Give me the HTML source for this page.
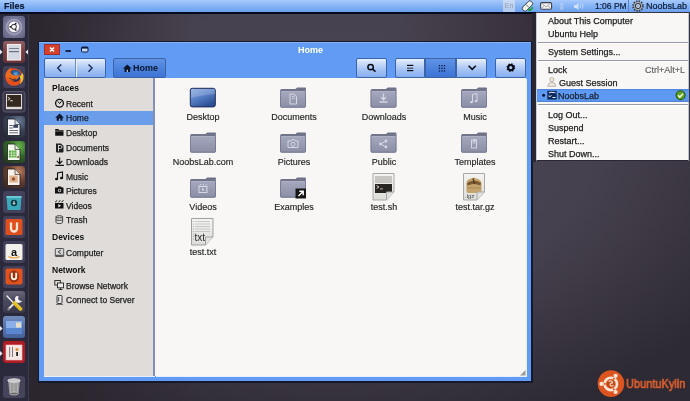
<!DOCTYPE html>
<html><head><meta charset="utf-8">
<style>
*{margin:0;padding:0;box-sizing:border-box}
html,body{width:690px;height:401px;overflow:hidden;font-family:"Liberation Sans",sans-serif;-webkit-font-smoothing:antialiased}
.a,.btn,#side .h,#side .i,.lbl,#menu .m{will-change:transform}
body{position:relative;background:#2a2529}
.a{position:absolute}
#bg{left:0;top:0;width:690px;height:401px;background:radial-gradient(ellipse 480px 300px at 330px 140px,#4a4552 0%,#46414e 55%,#2e2a34 100%)}
#bg2{left:0;top:0;width:690px;height:401px;background:linear-gradient(90deg,rgba(44,38,46,1) 0px,rgba(44,38,46,1) 30px,rgba(44,38,46,0) 190px)}
#panel{left:0;top:0;width:690px;height:12px;background:linear-gradient(#a8cafc,#88b6f6 45%,#6aa0ee)}
#panel .t{font-size:9px;color:#0e1a34;top:1px;line-height:11px;-webkit-text-stroke:.2px #0e1a34}
#launcher{left:0;top:13px;width:29px;height:388px;background:#2b2733;border-right:1px solid #3a3540}
.tile{position:absolute;left:3px;width:22px;height:22px;border-radius:3px;overflow:hidden}
#win{left:39px;top:42px;width:493px;height:340px;background:#6399ec;border:1px solid #1a2540}
.btn{position:absolute;top:58px;height:20px;border:1px solid #3c64a8;border-radius:2px;background:linear-gradient(#e6eefc,#a9c6f4 55%,#86aef0)}
.btnp{background:linear-gradient(#5f93e6,#3d74d4)}
#side{left:44px;top:78px;width:111px;height:298px;background:#dfdcd9;border-right:2px solid #8490b8;box-shadow:0 1px 0 #e8f0fc}
#side .h{position:absolute;left:8px;font-size:8.5px;font-weight:bold;color:#111;line-height:10px}
#side .i{position:absolute;left:22px;font-size:8.5px;color:#1e1e1e;line-height:10px;-webkit-text-stroke:.25px #1e1e1e}
#content{left:155px;top:78px;width:371px;height:298px;background:#f8f7f6;box-shadow:1px 1px 0 #e8f0fc}
.lbl{position:absolute;font-size:9px;color:#242424;line-height:10px;text-align:center;width:90px;-webkit-text-stroke:.15px #242424}
.fold{position:absolute;width:26px;height:20px}
#menu{left:536px;top:13px;width:153px;height:148px;background:#f8f7f6;border:1px solid #c8ccd4;border-top:none;border-bottom-color:#2a2834;border-right-color:#bcc6d0}
#menu .m{position:absolute;left:11px;font-size:9px;color:#222;line-height:10px;-webkit-text-stroke:.25px #222}
#menu .sep{position:absolute;left:1px;width:150px;height:2px;border-top:1px solid #959aa4;border-bottom:1px solid #fff}
</style></head><body>
<div id="bg" class="a"></div>
<div id="bg2" class="a"></div>
<div class="a" style="left:400px;top:13px;width:132px;height:30px;background:linear-gradient(90deg,rgba(36,26,32,0),rgba(36,26,32,.4))"></div>

<!-- top panel -->
<div id="panel" class="a">
  <div class="a t" style="left:4px;font-weight:bold;font-size:9px">Files</div>
  <div class="a" style="left:503px;top:0;width:12px;height:12px;background:rgba(225,230,240,.6);color:#9a9aa4;font-size:7px;line-height:12px;text-align:center">En</div>
  <svg class="a" style="left:520px;top:0" width="70" height="12" viewBox="0 0 70 12">
    <g transform="translate(7.5,6) rotate(-45)">
      <rect x="-6" y="-2.6" width="12" height="5.2" rx="2.2" fill="#eef4e6" stroke="#30384a" stroke-width=".9"/>
      <path d="M0 -2.4 v4.8" stroke="#505a64" stroke-width=".8"/>
    </g>
    <path d="M8.3 9.3 l1.3 1.3 l3.2 -3.2" stroke="#18a030" stroke-width="1.6" fill="none"/>
    <rect x="20.6" y="2.6" width="11" height="6.6" rx="1.2" fill="#f4f2ee" stroke="#3a4254" stroke-width="1.1"/>
    <path d="M21.5 3.4 L26.1 6.8 L30.7 3.4 M21.5 8.4 l2.8 -2.5 M30.7 8.4 l-2.8 -2.5" stroke="#8a8e98" stroke-width=".7" fill="none"/>
    <rect x="40" y="3" width="3.5" height="7" fill="#c0d2ee" opacity=".5"/>
    <path d="M54 5 h2 l2.5 -2 v7 l-2.5 -2 h-2z" fill="#e6eefa" opacity=".8"/>
    <path d="M60 4 q1.5 2 0 4 M62 3 q2.5 3 0 6" stroke="#e6eefa" stroke-width=".8" fill="none" opacity=".7"/>
  </svg>
  <div class="a t" style="left:595px;font-size:8.5px;top:1px">1:06 PM</div>
  <div class="a" style="left:628px;top:0;width:1px;height:12px;background:#5a86c8"></div>
  <svg class="a" style="left:632px;top:0" width="12" height="12" viewBox="0 0 12 12">
    <g transform="translate(6,6)">
    <circle r="4.6" fill="none" stroke="#30343c" stroke-width="2.4" stroke-dasharray="1.3 1.11"/>
    <circle r="3.9" fill="#f2f2f4" stroke="#50545c" stroke-width=".5"/>
    <circle r="2.5" fill="none" stroke="#2a2c34" stroke-width="1.1"/>
    <circle r="1.6" fill="#9ab8e0"/>
    </g>
  </svg>
  <div class="a t" style="left:646px">NoobsLab</div>
</div>

<!-- launcher -->
<svg class="a" style="left:0;top:0" width="29" height="401" viewBox="0 0 29 401">
<defs>
 <linearGradient id="gloss" x1="0" y1="0" x2="0" y2="1"><stop offset="0" stop-color="#fff" stop-opacity=".22"/><stop offset=".5" stop-color="#fff" stop-opacity=".05"/><stop offset="1" stop-color="#000" stop-opacity=".1"/></linearGradient>
 <radialGradient id="dashg" cx=".5" cy=".5" r=".7"><stop offset="0" stop-color="#a4a4bc"/><stop offset=".5" stop-color="#7c7c9c"/><stop offset="1" stop-color="#5c5c7e"/></radialGradient>
 <radialGradient id="ffg" cx=".55" cy=".35" r=".6"><stop offset="0" stop-color="#6ab0e0"/><stop offset=".45" stop-color="#2a5a9a"/><stop offset="1" stop-color="#1a2a50"/></radialGradient>
<radialGradient id="wg" cx=".7" cy=".25" r=".9"><stop offset="0" stop-color="#6a7c98"/><stop offset=".5" stop-color="#3a4458"/><stop offset="1" stop-color="#262a36"/></radialGradient>
 <radialGradient id="cg" cx=".7" cy=".25" r=".9"><stop offset="0" stop-color="#6ab850"/><stop offset=".5" stop-color="#356a2a"/><stop offset="1" stop-color="#24361e"/></radialGradient>
 <radialGradient id="ig" cx=".7" cy=".25" r=".9"><stop offset="0" stop-color="#c08060"/><stop offset=".5" stop-color="#6a4030"/><stop offset="1" stop-color="#3a2822"/></radialGradient>
</defs>
<rect x="0" y="13" width="29" height="388" fill="#2b293c"/>
<rect x="28" y="13" width="1" height="388" fill="#3c3a50"/>
<!-- dash -->
<rect x="3" y="16" width="22" height="22" rx="2.5" fill="url(#dashg)"/>
<circle cx="14" cy="27" r="7.5" fill="none" stroke="#c4c4d8" stroke-width="1.5" opacity=".5"/>
<circle cx="14" cy="26.8" r="5.2" fill="#fbfbfe"/>
<circle cx="13.9" cy="26.8" r="2.5" fill="none" stroke="#111" stroke-width=".9"/>
<circle cx="10.3" cy="26.8" r=".9" fill="#111"/><circle cx="15.7" cy="23.7" r=".9" fill="#111"/><circle cx="15.7" cy="29.9" r=".9" fill="#111"/>
<!-- files (active) -->
<rect x="3" y="41" width="22" height="22" rx="3" fill="#6e3438"/>
<rect x="3" y="41" width="22" height="22" rx="3" fill="url(#gloss)"/>
<rect x="7.5" y="44.5" width="13" height="15.5" fill="#d4d8e2" stroke="#f8e8e4" stroke-width="1.2"/>
<rect x="9" y="48" width="10" height="1" fill="#7a8090"/><rect x="9" y="51" width="10" height="1.2" fill="#6a7080"/>
<path d="M0 49.5 L2.6 52 L0 54.5Z" fill="#e8e8ee"/>
<path d="M28 49.5 L25.4 52 L28 54.5Z" fill="#e8e8ee"/>
<!-- firefox -->
<rect x="3" y="66" width="22" height="22" rx="3" fill="#43415a"/>
<circle cx="14" cy="77" r="8.8" fill="#e4501c"/>
<circle cx="15.2" cy="75.8" r="6" fill="url(#ffg)"/>
<path d="M22.6 73 a8.8 8.8 0 0 1 -3 11.5 q2 -4 0 -8 z" fill="#f4c030"/>
<path d="M5.5 75 q1 -6 6.5 -7.5 q-2.5 2.5 -1.5 5 q1 2.5 4.5 3 q3 .3 5 -1.5 q-1 5.5 -6.5 6.5 q-6.5 .5 -8 -5.5z" fill="#ec6a1c"/>
<path d="M9 78 q3 2.5 7 1" stroke="#1a1a3a" stroke-width=".8" fill="none"/>
<!-- terminal -->
<rect x="3" y="91.5" width="22" height="20.5" rx="2.5" fill="#3a384a" stroke="#5c5a6c" stroke-width="1"/>
<rect x="6" y="94" width="16" height="15.2" fill="#dedad6"/>
<rect x="7" y="95" width="14" height="11.8" fill="#33291f"/>
<path d="M7.8 97.2 l2.3 1.5 l-2.3 1.5" stroke="#e8e4e0" stroke-width=".9" fill="none"/><rect x="10.2" y="100.3" width="2.6" height="1" fill="#e8e4e0"/>
<!-- writer -->
<rect x="3" y="116" width="22" height="22" rx="3" fill="url(#wg)"/>
<path d="M7.5 119 h7.5 l5 5.5 v11 h-12.5z" fill="#f6f6f8" stroke="#141820" stroke-width=".8"/>
<path d="M15 119 v5.5 h5" fill="#d8dce4" stroke="#141820" stroke-width=".6"/>
<rect x="9.3" y="125" width="3.5" height="1" fill="#5a6070"/><rect x="13.3" y="124.8" width="4.8" height="3" fill="#3a4458"/>
<rect x="9.3" y="127.5" width="3.5" height="1" fill="#5a6070"/>
<rect x="9.3" y="130" width="8.8" height="1" fill="#6a7080"/><rect x="9.3" y="132.3" width="8.8" height="1" fill="#6a7080"/>
<!-- calc -->
<rect x="3" y="141" width="22" height="22" rx="3" fill="url(#cg)"/>
<path d="M7.5 144 h7.5 l5 5.5 v11 h-12.5z" fill="#f2f8ee" stroke="#142010" stroke-width=".8"/>
<path d="M15 144 v5.5 h5" fill="#d8e4d0" stroke="#142010" stroke-width=".6"/>
<rect x="9" y="150.5" width="7.5" height="7" fill="#58a83e"/>
<path d="M9 153 h7.5 M9 155.3 h7.5 M11.5 150.5 v7 M14 150.5 v7" stroke="#e4f4d8" stroke-width=".6"/>
<path d="M16.5 158 l2 -3 l.8 3z" fill="#8a6a40"/>
<!-- impress -->
<rect x="3" y="166" width="22" height="22" rx="3" fill="url(#ig)"/>
<path d="M7.5 169 h7.5 l5 5.5 v11 h-12.5z" fill="#f8f0ea" stroke="#201410" stroke-width=".8"/>
<path d="M15 169 v5.5 h5" fill="#e8dcd0" stroke="#201410" stroke-width=".6"/>
<rect x="9.3" y="175.5" width="8.5" height="7" fill="#e0b490"/>
<circle cx="13.5" cy="179" r="1.7" fill="#9a5030"/>
<!-- software center -->
<rect x="3" y="191" width="22" height="22" rx="3" fill="#43415a"/>
<path d="M6.5 196 h15 l-1 14 h-13z" fill="#3aa8b8"/>
<rect x="6.5" y="196" width="15" height="2" fill="#6ac8d4"/>
<circle cx="14" cy="203" r="3.2" fill="#0e3a44"/>
<path d="M14 201 v3 M12.8 203 l1.2 1.4 l1.2 -1.4" stroke="#fff" stroke-width=".9" fill="none"/>
<!-- ubuntu store U -->
<rect x="3" y="216" width="22" height="22" rx="3" fill="#43415a"/>
<rect x="5.5" y="219" width="17" height="16" rx="1.5" fill="#e0501e"/>
<path d="M11 222.5 v6 a3 3 0 0 0 6 0 v-6" stroke="#fbe6d6" stroke-width="2.3" fill="none"/>
<!-- amazon -->
<rect x="3" y="241" width="22" height="22" rx="3" fill="#43415a"/>
<rect x="5.5" y="244" width="17" height="16" rx="1.5" fill="#f2f0ea"/>
<text x="14" y="255.5" font-family="Liberation Sans" font-weight="bold" font-size="11" text-anchor="middle" fill="#111">a</text>
<path d="M8.5 256.5 q5.5 3 11 0" stroke="#e89a30" stroke-width="1.2" fill="none"/>
<!-- ubuntu one -->
<rect x="3" y="266" width="22" height="22" rx="3" fill="#43415a"/>
<rect x="5.5" y="268.5" width="17" height="16" rx="2" fill="#e2521e"/>
<ellipse cx="14" cy="276.5" rx="5" ry="6" fill="#5a1a0a" opacity=".55"/>
<path d="M11.8 272.8 v4.2 a2.2 2.2 0 0 0 4.4 0 v-4.2" stroke="#fff0e0" stroke-width="1.9" fill="none"/>
<!-- system tools -->
<rect x="3" y="291" width="22" height="22" rx="3" fill="#3e3c52"/>
<rect x="3" y="291" width="22" height="22" rx="3" fill="url(#gloss)"/>
<path d="M7 296 L15 304.5" stroke="#f4f4f4" stroke-width="1.3" stroke-linecap="round"/>
<path d="M8.5 309 L17 300.5" stroke="#e8e8e8" stroke-width="1.8"/>
<path d="M16.5 296 a3.8 3.8 0 1 0 5.5 5 l-2.6 -.4 l-1.4 -1.9 l.7 -2.4z" fill="#f2f2f2"/>
<path d="M7.8 310 l1.8 -1.8" stroke="#888" stroke-width="2"/>
<path d="M14.5 303 L20.5 309" stroke="#e0b818" stroke-width="3.8" stroke-linecap="round"/>
<path d="M15 302.5 L21 308.5" stroke="#f8e070" stroke-width=".8" stroke-linecap="round"/>
<!-- workspace -->
<rect x="3" y="316" width="22" height="22" rx="3" fill="#4a6aa8"/>
<rect x="3" y="316" width="22" height="22" rx="3" fill="url(#gloss)"/>
<rect x="6" y="321" width="16" height="13" rx="1" fill="#2a4a8a"/>
<rect x="6" y="321" width="16" height="7" fill="#8aaee8"/><rect x="6" y="328" width="16" height="6" fill="#5a86d0"/>
<rect x="16" y="322.5" width="5" height="5" fill="#e8dcc4"/>
<path d="M0 326 L2.6 328.5 L0 331Z" fill="#e8e8ee"/>
<!-- red -->
<rect x="3" y="341" width="22" height="22" rx="3" fill="#b01c24"/>
<rect x="6" y="345" width="16" height="15" fill="#f6e6e4" stroke="#f8c8c8" stroke-width=".6"/>
<rect x="9.2" y="347" width=".9" height="10" fill="#707070"/><rect x="12" y="347" width=".9" height="10" fill="#707070"/>
<circle cx="17" cy="349.5" r="1.6" fill="#e0902c"/><rect x="16.2" y="352" width="1.8" height="4" fill="#222"/>
<path d="M0 351 L2.6 353.5 L0 356Z" fill="#e8e8ee"/>
<!-- trash -->
<rect x="3" y="376" width="22" height="22" rx="3" fill="#46445a"/>
<path d="M8 380 h12 l-1.5 14 h-9z" fill="#9a9a9a"/>
<ellipse cx="14" cy="380.5" rx="6.2" ry="1.8" fill="#c8c8c8" stroke="#eee" stroke-width=".7"/>
<ellipse cx="14" cy="393.5" rx="4.5" ry="1.5" fill="#6a6a6a" stroke="#ddd" stroke-width=".6"/>
<path d="M10.5 383 v9 M14 383 v9.5 M17.5 383 v9" stroke="#c0c0c0" stroke-width=".6"/>
</svg>


<div class="a" style="left:0;top:12px;width:536px;height:2px;background:#050a1e"></div>
<!-- window -->
<div class="a" style="left:38px;top:41px;width:495px;height:342px;background:#141a2c"></div>
<div class="a" style="left:39px;top:42px;width:492px;height:339px;background:#629bf4;border-top:1px solid #86b2f6"></div>
<div class="a" style="left:44px;top:44px;width:16px;height:11px;background:#d8402e;border:1px solid #9a3030"></div>
<div class="a" style="left:298px;top:45px;font-size:9px;font-weight:bold;color:#fff;line-height:10px">Home</div>
<div class="btn" style="left:44px;width:62px"></div>
<div class="a" style="left:75px;top:59px;width:1px;height:18px;background:#6a8cc8;box-shadow:1px 0 0 #e6eefc"></div>
<div class="btn btnp" style="left:113px;width:53px"></div>
<div class="a" style="left:133px;top:63px;font-size:9px;font-weight:bold;color:#0a1530;line-height:10px">Home</div>
<div class="btn" style="left:356px;width:31px"></div>
<div class="btn" style="left:395px;width:30px;border-radius:2px 0 0 2px"></div>
<div class="btn btnp" style="left:425px;width:31px;border-radius:0"></div>
<div class="btn" style="left:456px;width:31px;border-radius:0 2px 2px 0"></div>
<div class="btn" style="left:495px;width:31px"></div>

<div id="side" class="a">
    <div class="h" style="top:5px">Places</div>
    <div class="i" style="top:21px">Recent</div>
    <div class="a" style="left:0;top:33px;width:109px;height:14px;background:#6a9eea"></div>
    <div class="i" style="top:35px;color:#13203c">Home</div>
    <div class="i" style="top:50px">Desktop</div>
    <div class="i" style="top:65px">Documents</div>
    <div class="i" style="top:79px">Downloads</div>
    <div class="i" style="top:94px">Music</div>
    <div class="i" style="top:108px">Pictures</div>
    <div class="i" style="top:123px">Videos</div>
    <div class="i" style="top:137px">Trash</div>
    <div class="h" style="top:154px">Devices</div>
    <div class="i" style="top:170px">Computer</div>
    <div class="h" style="top:187px">Network</div>
    <div class="i" style="top:203px">Browse Network</div>
    <div class="i" style="top:217px">Connect to Server</div>
</div>
<div id="content" class="a">
    <div class="lbl" style="left:3px;top:34px">Desktop</div>
    <div class="lbl" style="left:94px;top:34px">Documents</div>
    <div class="lbl" style="left:184px;top:34px">Downloads</div>
    <div class="lbl" style="left:275px;top:34px">Music</div>
    <div class="lbl" style="left:3px;top:79px">NoobsLab.com</div>
    <div class="lbl" style="left:94px;top:79px">Pictures</div>
    <div class="lbl" style="left:184px;top:79px">Public</div>
    <div class="lbl" style="left:275px;top:79px">Templates</div>
    <div class="lbl" style="left:3px;top:124px">Videos</div>
    <div class="lbl" style="left:94px;top:124px">Examples</div>
    <div class="lbl" style="left:184px;top:124px">test.sh</div>
    <div class="lbl" style="left:275px;top:124px">test.tar.gz</div>
    <div class="lbl" style="left:3px;top:169px">test.txt</div>
</div>

<!-- content icons -->
<svg class="a" style="left:0;top:0" width="690" height="401" viewBox="0 0 690 401">
<defs>
 <linearGradient id="fg" x1="0" y1="0" x2="0" y2="1"><stop offset="0" stop-color="#a8abc0"/><stop offset="1" stop-color="#8a8ea6"/></linearGradient>
 <linearGradient id="dg" x1="0" y1="0" x2=".6" y2="1"><stop offset="0" stop-color="#88a8e0"/><stop offset=".5" stop-color="#5a82c8"/><stop offset="1" stop-color="#2c4e94"/></linearGradient>
 <linearGradient id="pg" x1="0" y1="0" x2="0" y2="1"><stop offset="0" stop-color="#f4f4f2"/><stop offset="1" stop-color="#dcdcd8"/></linearGradient>
</defs>
<!-- desktop -->
<rect x="190.3" y="88.3" width="25" height="18.6" rx="2" fill="url(#dg)" stroke="#1c2c58" stroke-width="1"/>
<path d="M191 98 q10 -3 24 -4 v-5 h-24z" fill="#fff" opacity=".18"/>
<g transform="translate(280,87.5)">
  <path d="M14.5 2.5 L16.8 0.3 q.3 -.3 .8 -.3 h7.4 q1 0 1 1 v2.5 h-11.5z" fill="#6e7288"/>
  <rect x="0" y="1.6" width="26" height="18.6" rx="1.6" fill="url(#fg)"/>
  <rect x="0.5" y="2.1" width="25" height="17.6" rx="1.3" fill="none" stroke="#6c7086" stroke-width="1" opacity=".7"/>
  <path d="M1 2.6 h24" stroke="#5e6276" stroke-width="1.2"/>
  <path d="M1.5 4 h23" stroke="#c0c2d2" stroke-width=".6" opacity=".6"/>
  <path d="M10 6.5 h4 l2.5 2.5 v7.5 h-6.5z" stroke="#d6d8e4" fill="none" stroke-width="1"/><path d="M12 9 h1.5 a1 1 0 0 1 0 2.2 h-1.5" stroke="#d6d8e4" fill="none" stroke-width="1"/>
</g><g transform="translate(370.5,87.5)">
  <path d="M14.5 2.5 L16.8 0.3 q.3 -.3 .8 -.3 h7.4 q1 0 1 1 v2.5 h-11.5z" fill="#6e7288"/>
  <rect x="0" y="1.6" width="26" height="18.6" rx="1.6" fill="url(#fg)"/>
  <rect x="0.5" y="2.1" width="25" height="17.6" rx="1.3" fill="none" stroke="#6c7086" stroke-width="1" opacity=".7"/>
  <path d="M1 2.6 h24" stroke="#5e6276" stroke-width="1.2"/>
  <path d="M1.5 4 h23" stroke="#c0c2d2" stroke-width=".6" opacity=".6"/>
  <path d="M13 6 v6 M10.5 9.8 l2.5 2.5 l2.5 -2.5 M9 14.5 h8" stroke="#d6d8e4" fill="none" stroke-width="1.3"/>
</g><g transform="translate(461,87.5)">
  <path d="M14.5 2.5 L16.8 0.3 q.3 -.3 .8 -.3 h7.4 q1 0 1 1 v2.5 h-11.5z" fill="#6e7288"/>
  <rect x="0" y="1.6" width="26" height="18.6" rx="1.6" fill="url(#fg)"/>
  <rect x="0.5" y="2.1" width="25" height="17.6" rx="1.3" fill="none" stroke="#6c7086" stroke-width="1" opacity=".7"/>
  <path d="M1 2.6 h24" stroke="#5e6276" stroke-width="1.2"/>
  <path d="M1.5 4 h23" stroke="#c0c2d2" stroke-width=".6" opacity=".6"/>
  <path d="M11.5 14.5 v-7.5 l4.5 -1 v7" stroke="#d6d8e4" fill="none" stroke-width="1" stroke-width="1.1"/><ellipse cx="10.5" cy="14.6" rx="1.5" ry="1.2" fill="#d6d8e4"/><ellipse cx="15" cy="13.6" rx="1.5" ry="1.2" fill="#d6d8e4"/>
</g><g transform="translate(190,132.5)">
  <path d="M14.5 2.5 L16.8 0.3 q.3 -.3 .8 -.3 h7.4 q1 0 1 1 v2.5 h-11.5z" fill="#6e7288"/>
  <rect x="0" y="1.6" width="26" height="18.6" rx="1.6" fill="url(#fg)"/>
  <rect x="0.5" y="2.1" width="25" height="17.6" rx="1.3" fill="none" stroke="#6c7086" stroke-width="1" opacity=".7"/>
  <path d="M1 2.6 h24" stroke="#5e6276" stroke-width="1.2"/>
  <path d="M1.5 4 h23" stroke="#c0c2d2" stroke-width=".6" opacity=".6"/>
  
</g><g transform="translate(280,132.5)">
  <path d="M14.5 2.5 L16.8 0.3 q.3 -.3 .8 -.3 h7.4 q1 0 1 1 v2.5 h-11.5z" fill="#6e7288"/>
  <rect x="0" y="1.6" width="26" height="18.6" rx="1.6" fill="url(#fg)"/>
  <rect x="0.5" y="2.1" width="25" height="17.6" rx="1.3" fill="none" stroke="#6c7086" stroke-width="1" opacity=".7"/>
  <path d="M1 2.6 h24" stroke="#5e6276" stroke-width="1.2"/>
  <path d="M1.5 4 h23" stroke="#c0c2d2" stroke-width=".6" opacity=".6"/>
  <path d="M8 8.5 h3 l1 -1.3 h2.5 l1 1.3 h2.5 v6.5 h-10z" stroke="#d6d8e4" fill="none" stroke-width="1"/><circle cx="13" cy="11.8" r="2" stroke="#d6d8e4" fill="none" stroke-width="1"/>
</g><g transform="translate(370.5,132.5)">
  <path d="M14.5 2.5 L16.8 0.3 q.3 -.3 .8 -.3 h7.4 q1 0 1 1 v2.5 h-11.5z" fill="#6e7288"/>
  <rect x="0" y="1.6" width="26" height="18.6" rx="1.6" fill="url(#fg)"/>
  <rect x="0.5" y="2.1" width="25" height="17.6" rx="1.3" fill="none" stroke="#6c7086" stroke-width="1" opacity=".7"/>
  <path d="M1 2.6 h24" stroke="#5e6276" stroke-width="1.2"/>
  <path d="M1.5 4 h23" stroke="#c0c2d2" stroke-width=".6" opacity=".6"/>
  <circle cx="10" cy="11.5" r="1.4" fill="#d6d8e4"/><circle cx="15.5" cy="8.5" r="1.4" fill="#d6d8e4"/><circle cx="15.5" cy="14.5" r="1.4" fill="#d6d8e4"/><path d="M10 11.5 L15.5 8.5 M10 11.5 L15.5 14.5" stroke="#d6d8e4" fill="none" stroke-width="1"/>
</g><g transform="translate(461,132.5)">
  <path d="M14.5 2.5 L16.8 0.3 q.3 -.3 .8 -.3 h7.4 q1 0 1 1 v2.5 h-11.5z" fill="#6e7288"/>
  <rect x="0" y="1.6" width="26" height="18.6" rx="1.6" fill="url(#fg)"/>
  <rect x="0.5" y="2.1" width="25" height="17.6" rx="1.3" fill="none" stroke="#6c7086" stroke-width="1" opacity=".7"/>
  <path d="M1 2.6 h24" stroke="#5e6276" stroke-width="1.2"/>
  <path d="M1.5 4 h23" stroke="#c0c2d2" stroke-width=".6" opacity=".6"/>
  <rect x="10.5" y="7.5" width="5" height="8" stroke="#d6d8e4" fill="none" stroke-width="1"/><path d="M11.5 9 h3 M11.5 10.5 h3" stroke="#d6d8e4" stroke-width=".8"/><rect x="12.5" y="6.5" width="2" height="2" fill="#d6d8e4"/>
</g><g transform="translate(190,177.5)">
  <path d="M14.5 2.5 L16.8 0.3 q.3 -.3 .8 -.3 h7.4 q1 0 1 1 v2.5 h-11.5z" fill="#6e7288"/>
  <rect x="0" y="1.6" width="26" height="18.6" rx="1.6" fill="url(#fg)"/>
  <rect x="0.5" y="2.1" width="25" height="17.6" rx="1.3" fill="none" stroke="#6c7086" stroke-width="1" opacity=".7"/>
  <path d="M1 2.6 h24" stroke="#5e6276" stroke-width="1.2"/>
  <path d="M1.5 4 h23" stroke="#c0c2d2" stroke-width=".6" opacity=".6"/>
  <rect x="9" y="9" width="8" height="6" stroke="#d6d8e4" fill="none" stroke-width="1"/><path d="M9.5 8 l1.5 -1.5 M12.5 8 l1.5 -1.5 M15.5 8 l1.2 -1.2" stroke="#d6d8e4" fill="none" stroke-width="1" stroke-width=".9"/><path d="M12 10.5 v3 l2.5 -1.5z" fill="#d6d8e4"/>
</g><g transform="translate(280,177.5)">
  <path d="M14.5 2.5 L16.8 0.3 q.3 -.3 .8 -.3 h7.4 q1 0 1 1 v2.5 h-11.5z" fill="#6e7288"/>
  <rect x="0" y="1.6" width="26" height="18.6" rx="1.6" fill="url(#fg)"/>
  <rect x="0.5" y="2.1" width="25" height="17.6" rx="1.3" fill="none" stroke="#6c7086" stroke-width="1" opacity=".7"/>
  <path d="M1 2.6 h24" stroke="#5e6276" stroke-width="1.2"/>
  <path d="M1.5 4 h23" stroke="#c0c2d2" stroke-width=".6" opacity=".6"/>
  <rect x="15.5" y="11" width="10.5" height="10" fill="#161616"/><path d="M18.5 18.5 l4.5 -4.5 M19.3 13.8 h3.9 v3.9" stroke="#fff" stroke-width="1.4" fill="none"/>
</g>
<!-- test.sh -->
<path d="M373 173.5 h21 v18.5 l-7.5 8 h-13.5z" fill="url(#pg)" stroke="#a8a8a8" stroke-width="1"/>
<rect x="375" y="176" width="17" height="7" fill="#c8c6c2"/>
<path d="M375 184 h17 v8 l-1 1 h-16z" fill="#2a2624"/>
<path d="M376.5 185.5 l2.5 1.5 l-2.5 1.5" stroke="#eee" stroke-width=".8" fill="none"/>
<rect x="380" y="188.5" width="3" height=".8" fill="#ccc"/>
<path d="M386.5 200 v-8 h7.5" fill="#e0e0dc" stroke="#a8a8a8" stroke-width="1"/>
<path d="M525.5 370 v5.5 h-5.5z" fill="#9a9a9a"/>
<!-- test.tar.gz -->
<path d="M463.5 173.5 h21 v18.5 l-7.5 8 h-13.5z" fill="url(#pg)" stroke="#a8a8a8" stroke-width="1"/>
<path d="M466.5 183 q0 -3 3 -4 l4 -1.5 l4.5 1.5 q3 1 3.5 4 v8 q0 2 -2 2 h-11 q-2 0 -2 -2z" fill="#c4a46c"/>
<path d="M467 183 q7 -4.5 14 0 l-.5 2.5 q-6.5 -3 -13 0z" fill="#7a5a30"/>
<path d="M473 178.5 l1.5 5" stroke="#4a3418" stroke-width="1.2"/>
<path d="M467 188 h14" stroke="#a88450" stroke-width=".8"/>
<text x="465.3" y="198" font-family="Liberation Sans" font-size="5.5" font-style="italic" fill="#3a3a3a">.tgz</text>
<path d="M477 200 v-8 h7.5" fill="#e0e0dc" stroke="#a8a8a8" stroke-width="1"/>
<!-- test.txt -->
<path d="M191.5 218.5 h21.5 v18.5 l-7.5 8 h-14z" fill="url(#pg)" stroke="#a0a0a0" stroke-width="1"/>
<g stroke="#b8b8b8" stroke-width=".7"><path d="M195 221.5 h15 M195 224 h15 M195 226.5 h15 M195 229 h15 M195 231.5 h15"/></g>
<g fill="#999"><circle cx="193.3" cy="221.5" r=".5"/><circle cx="193.3" cy="224" r=".5"/><circle cx="193.3" cy="226.5" r=".5"/><circle cx="193.3" cy="229" r=".5"/><circle cx="193.3" cy="231.5" r=".5"/><circle cx="193.3" cy="234" r=".5"/><circle cx="193.3" cy="236.5" r=".5"/><circle cx="193.3" cy="239" r=".5"/></g>
<text x="194.5" y="241" font-family="Liberation Sans" font-size="10" fill="#2a2a2a">txt</text>
<path d="M205.5 245 v-8 h7.5" fill="#e4e4e0" stroke="#a0a0a0" stroke-width="1"/>
</svg>

<!-- sidebar icons -->
<svg class="a" style="left:0;top:0" width="690" height="401" viewBox="0 0 690 401">
 <g stroke="#111" fill="none">
  <circle cx="59.5" cy="103.3" r="3.9" stroke-width="1.3"/>
  <path d="M57.8 101.3 L59.6 103.6 L61.6 101.2" stroke-width="1"/>
 </g>
 <path d="M59.6 113.6 L55.2 117.8 h1.5 v3 h5.8 v-3 h1.5z" fill="#0e1a36"/>
 <rect x="59" y="118.6" width="1.3" height="2.2" fill="#9ab8e8"/>
 <path d="M55.2 129 h3 l1 1 h4.3 v5.8 h-8.3z" fill="#111"/>
 <path d="M55.2 131 h8.3" stroke="#ddd" stroke-width=".5"/>
 <path d="M56 143.5 h5 l2.5 2.5 v5.5 a1 1 0 0 1 -1 1 h-5.5 a1 1 0 0 1 -1 -1z" fill="#222"/>
 <path d="M58.5 145.5 h2 a1.2 1.2 0 0 1 0 3 h-2 M58.5 144.8 v6.5" stroke="#ddd" stroke-width=".9" fill="none"/>
 <path d="M59.6 157.5 v6 M56.8 160.8 l2.8 2.8 l2.8 -2.8 M55.3 165.3 h8.6" stroke="#111" stroke-width="1.2" fill="none"/>
 <path d="M57.5 179 v-6 l5 -1 v6" stroke="#111" stroke-width="1.1" fill="none"/>
 <ellipse cx="56.6" cy="179" rx="1.6" ry="1.2" fill="#111"/><ellipse cx="61.6" cy="178" rx="1.6" ry="1.2" fill="#111"/>
 <path d="M55 187.5 h2.5 l.8 -1 h2.6 l.8 1 h1.8 v6 h-8.5z" fill="#111"/>
 <circle cx="59.5" cy="190.5" r="1.7" fill="#ddd"/><circle cx="59.5" cy="190.5" r=".9" fill="#111"/>
 <rect x="55" y="203" width="8.5" height="5.5" fill="#111"/>
 <path d="M55.2 202 l2 -1.5 M58.5 202 l2 -1.5 M61.5 202 l2 -1.5" stroke="#111" stroke-width="1"/>
 <path d="M58.3 204 v3.5 l2.8 -1.75z" fill="#e8e8e8"/>
 <ellipse cx="59.3" cy="216.8" rx="3.3" ry="1.1" fill="none" stroke="#333" stroke-width=".9"/>
 <path d="M56 216.8 v5.5 a3.3 1.3 0 0 0 6.6 0 v-5.5 M56 219.3 a3.3 1.1 0 0 0 6.6 0" fill="none" stroke="#333" stroke-width=".9"/>
 <rect x="55.3" y="248.5" width="8.4" height="8" rx=".8" fill="#d8d8d8" stroke="#444" stroke-width=".9"/>
 <path d="M55.3 254.8 h8.4 v1.7 h-8.4z" fill="#555"/>
 <path d="M61 250 l-3 1.8 l3 1.8" stroke="#333" stroke-width=".9" fill="none"/>
 <rect x="54.8" y="280.5" width="5.5" height="4.5" fill="none" stroke="#222" stroke-width=".9"/>
 <rect x="57.5" y="283" width="6" height="4.8" fill="#eee" stroke="#222" stroke-width=".9"/>
 <path d="M60.5 287.8 v1.5 M58.5 289.5 h4" stroke="#222" stroke-width=".9"/>
 <rect x="57" y="295.5" width="5" height="8" rx=".7" fill="#e8e8e8" stroke="#222" stroke-width=".9"/>
 <rect x="58.2" y="297" width="1" height="4.5" fill="#444"/>
 <path d="M56 304.5 h7" stroke="#555" stroke-width=".8"/>
</svg>

<!-- window glyphs -->
<svg class="a" style="left:0;top:0" width="690" height="401" viewBox="0 0 690 401">
  <path d="M50 47.5 l4 4 M54 47.5 l-4 4" stroke="#fff" stroke-width="1.6"/>
  <rect x="65.5" y="50" width="5.5" height="2" fill="#1a2850"/>
  <rect x="81.5" y="47" width="6.5" height="5" rx="1" fill="#c8d8f0" stroke="#0e1a40" stroke-width="1"/>
  <rect x="81.5" y="47" width="6.5" height="1.6" fill="#0e1a40"/>
  <path d="M61.3 64.5 l-3.6 3.6 l3.6 3.6" stroke="#1a2c5c" stroke-width="1.4" fill="none"/>
  <path d="M88.5 64.5 l3.6 3.6 l-3.6 3.6" stroke="#1a2c5c" stroke-width="1.4" fill="none"/>
  <path d="M127.3 64.6 L123 68.6 h1.5 v3.3 h5.6 v-3.3 h1.5z" fill="#0a1530"/>
  <rect x="126.7" y="69.8" width="1.3" height="2.1" fill="#c0c8e0"/>
  <circle cx="370.6" cy="67.1" r="2.7" fill="none" stroke="#0a0a14" stroke-width="1.5"/>
  <path d="M372.6 69.1 l2.9 2.6" stroke="#0a0a14" stroke-width="1.6"/>
  <rect x="407" y="64.8" width="6.3" height="1.2" fill="#0a0a14"/>
  <rect x="407" y="67.6" width="6.3" height="1.3" fill="#505058"/>
  <rect x="407" y="70" width="6.3" height="1.2" fill="#0a0a14"/>
  <g fill="#0e1a40">
   <rect x="438.8" y="65" width="1.3" height="1.3"/><rect x="441.3" y="65" width="1.3" height="1.3"/><rect x="443.8" y="65" width="1.3" height="1.3"/>
   <rect x="438.8" y="67.7" width="1.3" height="1.3"/><rect x="441.3" y="67.7" width="1.3" height="1.3"/><rect x="443.8" y="67.7" width="1.3" height="1.3"/>
   <rect x="438.8" y="70.3" width="1.3" height="1.3"/><rect x="441.3" y="70.3" width="1.3" height="1.3"/><rect x="443.8" y="70.3" width="1.3" height="1.3"/>
  </g>
  <path d="M468.6 65.8 l3.6 3.6 l3.6 -3.6" stroke="#0a0a14" stroke-width="1.5" fill="none"/>
  <circle cx="510.8" cy="67.6" r="2.6" fill="none" stroke="#0a0a14" stroke-width="2"/>
  <circle cx="510.8" cy="67.6" r="3.6" fill="none" stroke="#0a0a14" stroke-width="1.5" stroke-dasharray="1.4 1.43"/>
</svg>

<!-- menu -->
<div class="a" style="left:532px;top:13px;width:4px;height:149px;background:#2a2632"></div>
<div id="menu" class="a">
  <div class="m" style="top:3px">About This Computer</div>
  <div class="m" style="top:16px">Ubuntu Help</div>
  <div class="sep" style="top:29px"></div>
  <div class="m" style="top:34px">System Settings...</div>
  <div class="sep" style="top:47px"></div>
  <div class="m" style="top:52px">Lock</div>
  <div class="m" style="top:52px;left:auto;right:3px;color:#606060;-webkit-text-stroke:.15px #606060">Ctrl+Alt+L</div>
  <div class="m" style="top:65px;left:22px">Guest Session</div>
  <div class="a" style="left:0;top:76px;width:152px;height:13px;background:linear-gradient(#4c84dc,#5e9af2 15%,#5e9af2 85%,#4a80d4)"></div>
  <div class="m" style="top:78px;left:21px;color:#102040">NoobsLab</div>
  <div class="sep" style="top:91px"></div>
  <div class="m" style="top:97px">Log Out...</div>
  <div class="m" style="top:110px">Suspend</div>
  <div class="m" style="top:123px">Restart...</div>
  <div class="m" style="top:136px">Shut Down...</div>
</div>

<svg class="a" style="left:0;top:0" width="690" height="401" viewBox="0 0 690 401">
 <circle cx="551.8" cy="79.6" r="2.1" fill="#f2e6d8" stroke="#a8a098" stroke-width=".7"/>
 <path d="M547.8 86.3 q0 -3.8 4 -4 q4 .2 4 4z" fill="#efe6dc" stroke="#a8a098" stroke-width=".7"/>
 <circle cx="543.6" cy="95.3" r="1.5" fill="#0a1430"/>
 <rect x="547.3" y="90.8" width="9.4" height="8.8" fill="#0e2a5c"/>
 <path d="M549 93 q2 -1.5 4 -.5 q1.5 -.5 2.5 .5 M548.5 96 q2 1 3 -.5 M552.5 97.5 h3" stroke="#e8f0ff" stroke-width="1" fill="none"/>
 <circle cx="680.6" cy="95.2" r="5" fill="#2a5a12"/>
 <circle cx="680.6" cy="95.2" r="3.9" fill="#5aa02a"/>
 <path d="M678 95.3 l1.8 1.8 l3.3 -3.3" stroke="#f4ffd8" stroke-width="1.6" fill="none"/>
</svg>
<!-- logo -->
<svg class="a" style="left:0;top:0" width="690" height="401" viewBox="0 0 690 401">
 <circle cx="611" cy="383.6" r="13.3" fill="#dc5520"/>
 <circle cx="610.8" cy="383.9" r="6.2" fill="none" stroke="#f6e4d6" stroke-width="2.6"/>
 <g stroke="#dc5520" stroke-width="1.6">
  <path d="M603.8 383.9 h2"/>
  <path d="M614.3 377.8 l-1 1.7"/>
  <path d="M614.3 390 l-1 -1.7"/>
 </g>
 <circle cx="601.5" cy="383.9" r="2.1" fill="#f6e4d6"/>
 <circle cx="615.6" cy="375.8" r="2.1" fill="#f6e4d6"/>
 <circle cx="615.6" cy="392" r="2.1" fill="#f6e4d6"/>
 <circle cx="610.8" cy="383.9" r="3.8" fill="#c44818"/>
 <path d="M608.5 381.3 q3.5 -1.2 4 1.5 q-3.2 .4 -2.2 2.6 q1.6 1.1 3.3 0" stroke="#f4d4c0" stroke-width="1.2" fill="none"/>
</svg>
<div class="a" style="left:626px;top:376px;font-size:12.5px;color:#dc6030;line-height:16px;transform:scaleX(.88);transform-origin:0 0;-webkit-text-stroke:.65px #dc6030">UbuntuKylin</div>
</body></html>
